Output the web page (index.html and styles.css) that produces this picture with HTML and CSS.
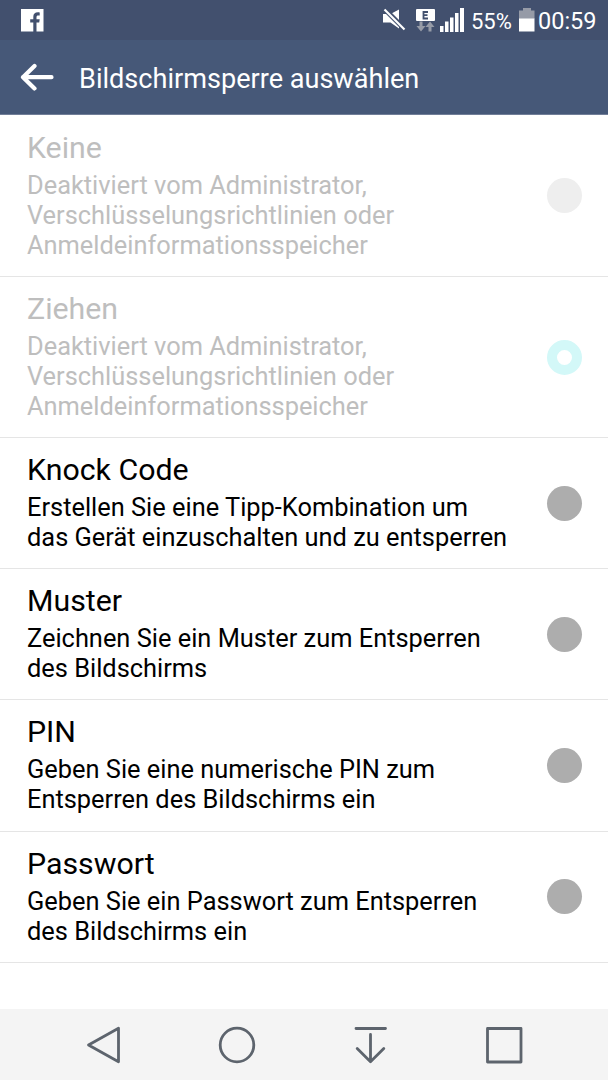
FILE: index.html
```html
<!DOCTYPE html>
<html lang="de">

<head>
  <meta charset="UTF-8">
  <meta name="viewport" content="width=device-width, initial-scale=1.0">
  <title>Bildschirmsperre auswählen</title>
  <link rel="stylesheet" href="styles.css">
</head>

<body>
  <div class="status-bar">
    <svg class="facebook" width="23" height="23" viewBox="0 0 23 23">
      <path fill="#fff" fill-rule="evenodd" d="M0 0h22.500v22.500H15.500v-9h2.700l.5-3.200h-3.200V8.200c0-1.200.5-1.700 1.700-1.700h1.500V3.400c-4.200-.6-6.400.9-6.400 4.500v2.400H9.200v3.200h3.100v9H0z"/>
    </svg>
    <div class="status-icons">
      <svg class="muted" width="24" height="24" viewBox="0 0 24 24">
        <path fill="#fff" d="M0 5h7.500L16 .5v19L7.500 13.500H0z"/>
        <path stroke="#42506e" stroke-width="5" d="M0 -1.500L23 21.500"/>
        <path stroke="#fff" stroke-width="2.200" d="M1.500 .5L21.500 20.500"/>
      </svg>
      <svg class="network" width="20" height="24" viewBox="0 0 20 24">
        <rect width="19" height="12" rx="1" fill="#fff"/>
        <path fill="none" stroke="#42506e" stroke-width="1.800" d="M12 3H7.500v6.500H12M7.500 6.200h4"/>
        <path fill="#969ba7" d="M3.500 12.500h3v4.500h3L5 22.500.5 17h3zM12.500 22.500h3V18h3L14 12.500 9.500 18h3z"/>
      </svg>
      <svg class="signal" width="24" height="24" viewBox="0 0 24 24">
        <path fill="#fff" d="M0 18h3.500v6H0zM5 13.500h3.500V24H5zM10 9.500h3.500V24H10zM15 5h3.500v19H15zM20 0h4v24h-4z"/>
      </svg>
      <span class="percent">55%</span>
      <svg class="battery" width="16" height="24" viewBox="0 0 16 24">
        <path fill="#969ba7" d="M4 0h8v2.500h3.500V11H0V2.500h4z"/>
        <path fill="#fff" d="M0 10.500h15.500V23.500H0z"/>
      </svg>
      <span class="clock">00:59</span>
    </div>
  </div>

  <header class="header">
    <svg class="back" width="34" height="28" viewBox="0 0 34 28">
      <path fill="none" stroke="#fff" stroke-width="4.200" stroke-linecap="round" stroke-linejoin="round" d="M14.500 3L3 14.200l11.500 11.200M3 14.200h28.500"/>
    </svg>
    <h1>Bildschirmsperre auswählen</h1>
  </header>

  <main class="options">
    <div class="option disabled">
      <div class="text">
        <h2>Keine</h2>
        <p>Deaktiviert vom Administrator,<br>Verschlüsselungsrichtlinien oder<br>Anmeldeinformationsspeicher</p>
      </div>
      <span class="radio"></span>
    </div>
    <div class="option disabled">
      <div class="text">
        <h2>Ziehen</h2>
        <p>Deaktiviert vom Administrator,<br>Verschlüsselungsrichtlinien oder<br>Anmeldeinformationsspeicher</p>
      </div>
      <span class="radio checked"></span>
    </div>
    <div class="option">
      <div class="text">
        <h2>Knock Code</h2>
        <p>Erstellen Sie eine Tipp-Kombination um<br>das Gerät einzuschalten und zu entsperren</p>
      </div>
      <span class="radio"></span>
    </div>
    <div class="option">
      <div class="text">
        <h2>Muster</h2>
        <p>Zeichnen Sie ein Muster zum Entsperren<br>des Bildschirms</p>
      </div>
      <span class="radio"></span>
    </div>
    <div class="option">
      <div class="text">
        <h2>PIN</h2>
        <p>Geben Sie eine numerische PIN zum<br>Entsperren des Bildschirms ein</p>
      </div>
      <span class="radio"></span>
    </div>
    <div class="option">
      <div class="text">
        <h2>Passwort</h2>
        <p>Geben Sie ein Passwort zum Entsperren<br>des Bildschirms ein</p>
      </div>
      <span class="radio"></span>
    </div>
  </main>

  <nav class="nav-bar">
    <svg width="40" height="40" viewBox="0 0 40 40">
      <path d="M4.500 20L34.500 3.200v33.600z"/>
    </svg>
    <svg width="40" height="40" viewBox="0 0 40 40">
      <circle cx="20" cy="20" r="16.800"/>
    </svg>
    <svg width="40" height="40" viewBox="0 0 40 40">
      <path d="M5 3.500h29.500M19.500 9.500v27M6.200 23.500l13.300 13.200 13.300-13.200"/>
    </svg>
    <svg width="40" height="40" viewBox="0 0 40 40">
      <path d="M3.500 3.500h33.500v33.500h-33.500z"/>
    </svg>
  </nav>
</body>

</html>
```

FILE: styles.css
```css
* {
  box-sizing: border-box;
}

body {
  font-family: Roboto, 'Liberation Sans', sans-serif;
  margin: 0;
  height: 1080px;
  display: flex;
  flex-direction: column;
  background-color: #fff;
  color: #000;
  overflow: hidden;
}

h1,
h2,
p {
  margin: 0;
  font-weight: 400;
  white-space: nowrap;
}

.status-bar {
  height: 40px;
  flex: none;
  padding: 0 12px 0 21px;
  display: flex;
  justify-content: space-between;
  background-color: #42506e;
  color: #fff;
}

.facebook {
  margin-top: 9px;
}

.status-icons {
  display: flex;
}

.muted {
  margin: 9px 9px 0 0;
  overflow: visible;
}

.network {
  margin: 9px 4px 0 0;
}

.signal {
  margin: 8px 7px 0 0;
}

.percent {
  width: 40px;
  font-size: 22px;
  line-height: 43px;
  margin-right: 8px;
}

.battery {
  margin: 8px 3px 0 0;
}

.clock {
  width: 58px;
  font-size: 23.5px;
  line-height: 43px;
}

.header {
  height: 75px;
  flex: none;
  display: flex;
  align-items: center;
  padding-left: 20px;
  background-color: #465878;
  border-bottom: 1px solid #717e98;
  color: #fff;
}

.back {
  margin-right: 25px;
}

.header h1 {
  font-size: 27.1px;
  line-height: 36px;
  padding-top: 4px;
}

.options {
  padding-top: 0.6px;
}

.option {
  display: flex;
  justify-content: space-between;
  align-items: center;
  padding: 14.1px 26.5px 16.1px 27px;
  border-bottom: 1px solid #e5e5e5;
}

.option h2 {
  font-size: 30.3px;
  line-height: 36px;
  margin-bottom: 4px;
}

.option p {
  font-size: 25.4px;
  line-height: 30px;
}

.radio {
  width: 35px;
  height: 35px;
  margin-top: 2.4px;
  border-radius: 50%;
  background-color: #adadad;
}

.disabled {
  color: #bebebe;
}

.disabled .radio {
  background-color: #eee;
}

.disabled .radio.checked {
  background-color: #fff;
  border: 10px solid #d3f8f8;
}

.nav-bar {
  height: 71px;
  margin-top: auto;
  padding: 0 84px 0 83.5px;
  display: flex;
  justify-content: space-between;
  align-items: center;
  background-color: #f4f4f4;
}

.nav-bar svg {
  fill: none;
  stroke: #5d646d;
  stroke-width: 2.8;
  stroke-linecap: round;
  stroke-linejoin: round;
}
```
